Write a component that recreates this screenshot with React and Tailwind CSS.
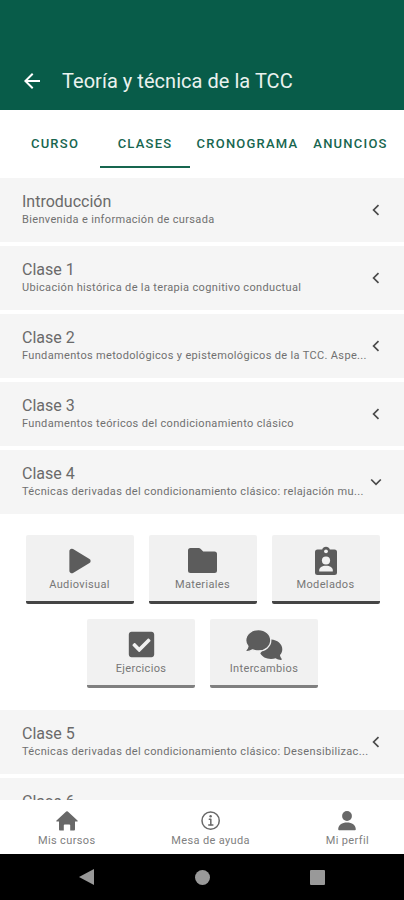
import { useState } from "react";
import { FaCheckSquare } from "react-icons/fa";
import { IoPlay, IoInformationCircleOutline } from "react-icons/io5";
import { MdArrowBack } from "react-icons/md";

const tabs = [
  { label: "CURSO", width: "w-[90px]" },
  { label: "CLASES", width: "w-[90px]" },
  { label: "CRONOGRAMA", width: "w-[115px]" },
  { label: "ANUNCIOS", width: "w-[91px]" },
];

const classes = [
  { title: "Introducción", subtitle: "Bienvenida e información de cursada" },
  { title: "Clase 1", subtitle: "Ubicación histórica de la terapia cognitivo conductual" },
  { title: "Clase 2", subtitle: "Fundamentos metodológicos y epistemológicos de la TCC. Aspe..." },
  { title: "Clase 3", subtitle: "Fundamentos teóricos del condicionamiento clásico" },
  { title: "Clase 4", subtitle: "Técnicas derivadas del condicionamiento clásico: relajación mu..." },
  { title: "Clase 5", subtitle: "Técnicas derivadas del condicionamiento clásico: Desensibilizac..." },
  { title: "Clase 6", subtitle: "" },
];

function FolderIcon() {
  return (
    <svg className="w-[29px] h-[25px]" viewBox="0 0 29 25" fill="currentColor">
      <path d="M2.500 0h8.200c.7 0 1.300.300 1.800.800L15.200 3.500H26.500A2.500 2.500 0 0 1 29 6v16.500a2.500 2.500 0 0 1-2.500 2.500h-24A2.500 2.500 0 0 1 0 22.500v-20A2.500 2.500 0 0 1 2.500 0z" />
    </svg>
  );
}

function ClipboardPersonIcon() {
  return (
    <svg className="w-[22px] h-[29px]" viewBox="0 0 22 29">
      <path
        fill="currentColor"
        d="M2.500 3.500h4.700a4 4 0 0 1 7.600 0h4.700A2.500 2.500 0 0 1 22 6v20.500a2.500 2.500 0 0 1-2.500 2.500h-17A2.500 2.500 0 0 1 0 26.500V6a2.500 2.500 0 0 1 2.500-2.500z"
      />
      <g fill="#f1f1f1">
        <circle cx="11" cy="5.300" r="1.900" />
        <circle cx="11" cy="14.500" r="4.100" />
        <path d="M4.200 25.500v-1.300c0-2.700 2.700-4.500 6.800-4.500s6.800 1.800 6.800 4.500v1.300z" />
      </g>
    </svg>
  );
}

function BubblesIcon() {
  return (
    <svg className="w-[37px] h-[30px]" viewBox="0 0 37 30">
      <path
        fill="currentColor"
        d="M25 9.500c6.400.300 11.300 4.600 11.300 9.700 0 2.300-.9 4.300-2.400 5.900.2 1.400.8 2.600 1.700 3.700.4.600.1 1.200-.6 1.100-2-.1-3.800-.8-5.300-1.700-1.500.5-3.100.8-4.700.8-4.900 0-9.100-2.200-10.700-5.700z"
      />
      <path
        fill="currentColor"
        stroke="#f1f1f1"
        strokeWidth="1.300"
        d="M12.500-.5C19.400-.5 24.800 4.300 24.800 10.300S19.400 21 12.500 21c-2.100 0-4.100-.4-5.900-1.100C5 20.800 2.800 21.600 1 21.600c-1.100 0-1.600-1.100-.9-1.900 1-1.100 1.600-2.200 1.800-3.400C.5 14.700-.3 12.600-.3 10.300-.3 4.300 5.500-.5 12.500-.5z"
      />
    </svg>
  );
}

const resources = [
  { label: "Audiovisual", icon: <IoPlay className="w-[34px] h-[34px] ml-px" />, border: "border-[#454545]" },
  { label: "Materiales", icon: <FolderIcon />, border: "border-[#454545]" },
  { label: "Modelados", icon: <ClipboardPersonIcon />, border: "border-[#454545]" },
  { label: "Ejercicios", icon: <FaCheckSquare className="w-[29px] h-[29px]" />, border: "border-[#808080]" },
  { label: "Intercambios", icon: <BubblesIcon />, border: "border-[#808080]" },
];

function HomeIcon() {
  return (
    <svg className="w-[22px] h-5" viewBox="0 0 22 20" fill="currentColor">
      <path d="M10.200.5a1.200 1.200 0 0 1 1.600 0l9.700 9c.4.4.2 1-.4 1H19v7.700c0 .8-.4 1.300-1.200 1.300h-3.600v-5.200c0-.6-.3-.9-.9-.9H8.700c-.6 0-.9.3-.9.9v5.200H4.200c-.8 0-1.200-.5-1.200-1.300v-7.700H.9c-.6 0-.8-.6-.4-1z" />
    </svg>
  );
}

function PersonIcon() {
  return (
    <svg className="w-[18px] h-5" viewBox="0 0 18 20" fill="currentColor">
      <circle cx="9" cy="5" r="4.900" />
      <path d="M.2 18.300C.2 14 4 11.500 9 11.500s8.800 2.500 8.800 6.800c0 .6-.3.900-.9.900H1.100c-.6 0-.9-.3-.9-.9z" />
    </svg>
  );
}

function Chevron({ open }) {
  return (
    <svg
      className={open ? "w-3 h-3 -rotate-90" : "w-3 h-3"}
      viewBox="0 0 12 12"
      fill="none"
      stroke="#4a4a4a"
      strokeWidth="1.700"
    >
      <path d="M8.500 1.200 3.600 6l4.900 4.800" />
    </svg>
  );
}

function Resources() {
  return (
    <div className="flex flex-wrap justify-center content-start gap-x-[15px] gap-y-4 h-48 pt-[17px] pl-[21px] pr-5">
      {resources.map((item) => (
        <button
          key={item.label}
          className={`flex flex-col items-center w-[108px] h-[69px] -mb-px pt-[9px] bg-[#f1f1f1] border-b-[3px] rounded-[2px] text-[#5c5c5c] ${item.border}`}
        >
          <span className="flex items-center justify-center h-[33px]">{item.icon}</span>
          <span className="text-[11px] leading-4 tracking-[0.35px] text-[#777]">{item.label}</span>
        </button>
      ))}
    </div>
  );
}

function ClassRow({ item, open, onToggle }) {
  return (
    <button onClick={onToggle} className="flex items-center shrink-0 w-full h-16 mb-1 px-[22px] bg-[#f5f5f5] text-left">
      <div className="flex-1 min-w-0 whitespace-nowrap pb-px">
        <h2 className="h-5 text-base leading-5 text-[#6a6a6a]">{item.title}</h2>
        <p className="h-4 text-[11px] leading-4 tracking-[0.34px] text-[#707070]">{item.subtitle}</p>
      </div>
      <Chevron open={open} />
    </button>
  );
}

function App() {
  const [tab, setTab] = useState("CLASES");
  const [openClass, setOpenClass] = useState("Clase 4");

  return (
    <div className="flex flex-col w-full h-[900px] overflow-hidden bg-white font-[Roboto,sans-serif]">
      {/* Header */}
      <header className="flex items-end h-[110px] shrink-0 pb-[17px] pl-5 bg-[#085c49] text-white">
        <MdArrowBack className="w-6 h-6" />
        <h1 className="ml-[18px] text-xl leading-6 tracking-[0.04px] text-[#eaf2ef]">Teoría y técnica de la TCC</h1>
      </header>

      {/* Tabs */}
      <nav className="flex h-[68px] shrink-0 pl-2.5 pt-[9px]">
        {tabs.map((item) => (
          <button
            key={item.label}
            onClick={() => setTab(item.label)}
            className={`h-[49px] pt-0.5 border-b-2 text-[13px] font-medium tracking-[1.23px] whitespace-nowrap text-[#17664f] ${item.width} ${
              tab === item.label ? "border-[#17664f]" : "border-transparent"
            }`}
          >
            {item.label}
          </button>
        ))}
      </nav>

      {/* Class list */}
      <main className="flex-1 min-h-0 overflow-hidden">
        {classes.map((item) => (
          <div key={item.title}>
            <ClassRow
              item={item}
              open={openClass === item.title}
              onToggle={() => setOpenClass(openClass === item.title ? "" : item.title)}
            />
            {openClass === item.title && <Resources />}
          </div>
        ))}
      </main>

      {/* Bottom navigation */}
      <nav className="flex justify-between h-[54px] shrink-0 pt-2 pl-[38px] pr-[35px] text-[11px] leading-4 tracking-[0.36px] text-[#808080]">
        <button className="flex flex-col items-center">
          <span className="flex items-center h-[25px] text-[#686868]"><HomeIcon /></span>
          Mis cursos
        </button>
        <button className="flex flex-col items-center">
          <span className="flex items-center h-[25px] text-[#686868]"><IoInformationCircleOutline className="w-6 h-6" /></span>
          Mesa de ayuda
        </button>
        <button className="flex flex-col items-center">
          <span className="flex items-center h-[25px] text-[#686868]"><PersonIcon /></span>
          Mi perfil
        </button>
      </nav>

      {/* System buttons */}
      <footer className="flex items-center h-[46px] shrink-0 pl-[79px] bg-black text-[#999]">
        <svg className="w-[15px] h-4" viewBox="0 0 15 16" fill="currentColor">
          <path d="M0 8 15 0v16z" />
        </svg>
        <div className="w-[15px] h-[15px] ml-[101px] rounded-full bg-[#999]" />
        <div className="w-[15px] h-[15px] ml-[100px] rounded-[1px] bg-[#999]" />
      </footer>
    </div>
  );
}

export default App;
